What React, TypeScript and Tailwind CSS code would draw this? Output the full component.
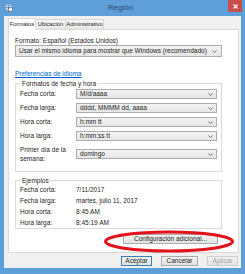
import React from "react";

const Chevron = () => (
    <svg width="5" height="3" viewBox="0 0 5 3" className="shrink-0">
        <path d="M0.5 0.5 L2.5 2.5 L4.5 0.5" stroke="#555" strokeWidth="0.8" fill="none" />
    </svg>
);

const Select = ({ value, className = "" }: { value: string; className?: string }) => (
    <div
        className={`flex items-center justify-between border border-[#acacac] bg-gradient-to-b from-[#f2f2f2] to-[#e6e6e6] pl-[3px] pr-[3px] text-[#1e1e1e] ${className}`}
    >
        <span className="whitespace-nowrap leading-none">{value}</span>
        <Chevron />
    </div>
);

const FormRow = ({ label, value }: { label: React.ReactNode; value: string }) => (
    <div className="flex items-center">
        <div className="w-[56px] leading-[10px] text-[#1e1e1e]">{label}</div>
        <Select value={value} className="h-[10px] flex-1" />
    </div>
);

const ExampleRow = ({ label, value }: { label: string; value: string }) => (
    <div className="flex h-[11px] items-center text-[#1e1e1e]">
        <div className="w-[56px]">{label}</div>
        <div>{value}</div>
    </div>
);

const Button = ({
    label,
    primary,
    disabled,
    className = "",
}: {
    label: string;
    primary?: boolean;
    disabled?: boolean;
    className?: string;
}) => (
    <div
        className={`flex h-[10px] items-center justify-center border bg-gradient-to-b from-[#f2f2f2] to-[#e3e3e3] leading-none ${
            primary ? "border-[#3c7fb1]" : disabled ? "border-[#cfcfcf]" : "border-[#acacac]"
        } ${disabled ? "text-[#a3a3a3]" : "text-[#1e1e1e]"} ${className}`}
    >
        {label}
    </div>
);

export default function App() {
    return (
        <div className="relative flex h-[274px] w-[245px] flex-col bg-[#5f9fd9] font-['Liberation_Sans',sans-serif] text-[6.5px]">
            {/* title bar */}
            <div className="relative flex h-[16px] shrink-0 items-start">
                <div className="ml-[4px] mt-[3px]">
                    <svg width="9" height="9" viewBox="0 0 9 9">
                        <circle cx="4.5" cy="4.5" r="4" fill="#e8f1fa" stroke="#2f6fae" strokeWidth="0.8" />
                        <path d="M1 4.5 H8 M4.5 1 V8 M2 2.5 Q4.5 4 7 2.5 M2 6.5 Q4.5 5 7 6.5" stroke="#2f6fae" strokeWidth="0.6" fill="none" />
                        <circle cx="6.5" cy="6.5" r="2" fill="#ffffff" stroke="#4a4a4a" strokeWidth="0.5" />
                    </svg>
                </div>
                <div className="flex-1 pt-[3px] text-center text-[8px] leading-[10px] text-[#2e4a66]">Región</div>
                <div className="mr-[3px] flex h-[12px] w-[14px] items-center justify-center bg-[#c94f4f]">
                    <svg width="5" height="5" viewBox="0 0 5 5">
                        <path d="M0.5 0.5 L4.5 4.5 M4.5 0.5 L0.5 4.5" stroke="#fff" strokeWidth="1.1" />
                    </svg>
                </div>
            </div>

            {/* body */}
            <div className="mx-[4px] mb-[6px] flex flex-1 flex-col bg-[#f0f0f0] pl-[4px] pr-[2px] pt-[2px]">
                {/* tabs */}
                <div className="relative z-10 flex h-[12px] items-end whitespace-nowrap text-[5.8px] text-[#1e1e1e]">
                    <div className="flex h-[12px] w-[28px] items-center justify-center border border-b-0 border-[#d9d9d9] bg-white">
                        Formatos
                    </div>
                    <div className="mb-[1px] flex h-[10px] w-[30px] items-center justify-center border border-l-0 border-b-0 border-[#d9d9d9] bg-gradient-to-b from-[#f5f5f5] to-[#e8e8e8]">
                        Ubicación
                    </div>
                    <div className="mb-[1px] flex h-[10px] w-[38px] items-center justify-center border border-l-0 border-b-0 border-[#d9d9d9] bg-gradient-to-b from-[#f5f5f5] to-[#e8e8e8]">
                        Administrativo
                    </div>
                </div>

                {/* panel */}
                <div className="-mt-[1px] flex h-[224px] flex-col border border-[#d9d9d9] bg-white pl-[6px] pr-[16px] pt-[7px]">
                    <div className="leading-[7px] text-[#1e1e1e]">Formato: Español (Estados Unidos)</div>
                    <Select
                        value="Usar el mismo idioma para mostrar que Windows (recomendado)"
                        className="mt-[1px] h-[12px] pr-[4px]"
                    />
                    <div className="mt-[13px] leading-[7px] text-[#0066cc] underline">Preferencias de idioma</div>

                    {/* fecha y hora group */}
                    <fieldset className="mt-[3px] h-[92px] border border-[#dcdcdc] pl-[4px] pr-[4px] pt-[2px]">
                        <legend className="ml-[1px] px-[1px] leading-[7px] text-[#1e1e1e]">Formatos de fecha y hora</legend>
                        <div className="flex flex-col gap-[4px]">
                            <FormRow label="Fecha corta:" value="M/d/aaaa" />
                            <FormRow label="Fecha larga:" value="dddd, MMMM dd, aaaa" />
                            <FormRow label="Hora corta:" value="h:mm tt" />
                            <FormRow label="Hora larga:" value="h:mm:ss tt" />
                            <FormRow
                                label={
                                    <span className="block leading-[9px]">
                                        Primer día de la
                                        <br />
                                        semana:
                                    </span>
                                }
                                value="domingo"
                            />
                        </div>
                    </fieldset>

                    {/* ejemplos group */}
                    <fieldset className="mt-[5px] h-[52px] border border-[#dcdcdc] pl-[4px] pr-[4px]">
                        <legend className="ml-[1px] px-[1px] leading-[7px] text-[#1e1e1e]">Ejemplos</legend>
                        <ExampleRow label="Fecha corta:" value="7/11/2017" />
                        <ExampleRow label="Fecha larga:" value="martes, julio 11, 2017" />
                        <ExampleRow label="Hora corta:" value="8:45 AM" />
                        <ExampleRow label="Hora larga:" value="8:45:19 AM" />
                    </fieldset>

                    <div className="mt-[5px] flex justify-end pr-[4px]">
                        <Button label="Configuración adicional..." className="w-[95px]" />
                    </div>
                </div>

                {/* dialog buttons */}
                <div className="mt-[3px] flex justify-end gap-[9px] pr-[1px]">
                    <Button label="Aceptar" primary className="w-[31px]" />
                    <Button label="Cancelar" className="w-[37px]" />
                    <Button label="Aplicar" disabled className="w-[31px]" />
                </div>
            </div>

            {/* red annotation oval */}
            <svg className="pointer-events-none absolute left-[103px] top-[230px]" width="132" height="23" viewBox="0 0 132 23">
                <ellipse cx="66" cy="11.5" rx="63.5" ry="9.5" fill="none" stroke="#e3121b" strokeWidth="3" />
            </svg>
        </div>
    );
}
